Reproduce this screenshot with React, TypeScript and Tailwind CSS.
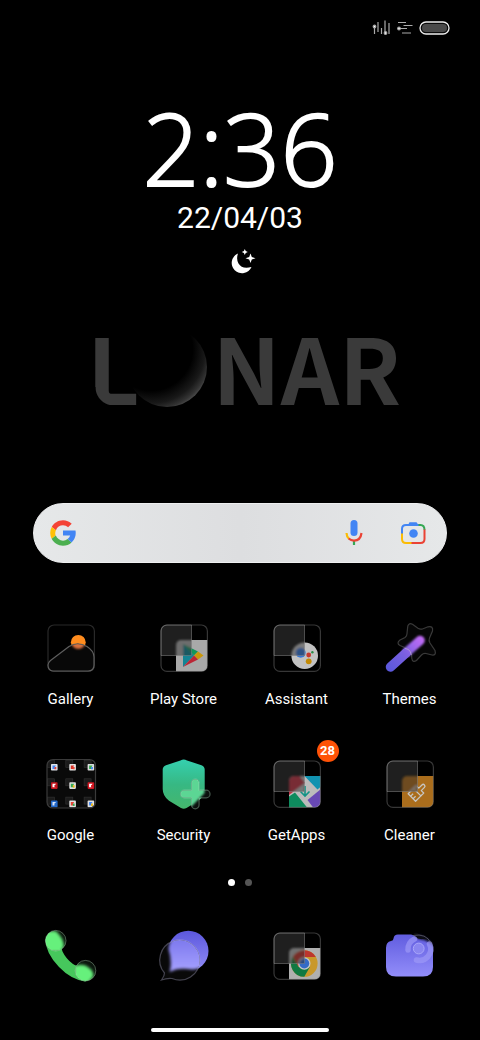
import type { ReactNode } from "react";

type IconProps = { children: ReactNode };

function Canvas({ children }: IconProps) {
  return (
    <svg viewBox="0 0 64 64" className="size-16 shrink-0" fill="none" aria-hidden="true">
      {children}
    </svg>
  );
}

/* Lunar tile: dark frame, smoked glass in the corner, app art peeking out below it. */
function GlassTile({ id, children }: { id: string; children: ReactNode }) {
  return (
    <Canvas>
      <defs>
        <clipPath id={`${id}-out`}>
          <path d="M39.5 24H55.5V55.5H24V39.5H39.5Z" />
        </clipPath>
        <clipPath id={`${id}-in`}>
          <rect x="9" y="9" width="30.5" height="30.5" />
        </clipPath>
        <clipPath id={`${id}-tile`}>
          <path d="M29 24H55.5V49.5A6 6 0 0 1 49.5 55.5H24V29A5 5 0 0 1 29 24Z" />
        </clipPath>
        <filter id={`${id}-blur`}>
          <feGaussianBlur stdDeviation="0.8" />
        </filter>
      </defs>
      <path d="M15 9H39.5V39.5H9V15A6 6 0 0 1 15 9Z" fill="#1f1f1f" />
      <g clipPath={`url(#${id}-in)`} opacity="0.5">
        <g filter={`url(#${id}-blur)`}>
          <g clipPath={`url(#${id}-tile)`}>{children}</g>
        </g>
      </g>
      <g clipPath={`url(#${id}-out)`} opacity="0.9">
        <g clipPath={`url(#${id}-tile)`}>{children}</g>
      </g>
      <rect x="9" y="9" width="46.4" height="46.4" rx="6" stroke="#8a8a8a" strokeOpacity="0.4" strokeWidth="1.2" />
      <path d="M15 9H39.5V39.5H9V15A6 6 0 0 1 15 9Z" stroke="#999" strokeOpacity="0.45" />
    </Canvas>
  );
}

function GalleryIcon() {
  const hill = "M11.5 44.5L30 30.5Q38.5 25 48 30.5Q55 35 55 41V49Q55 55 49 55H14Q9 54.500 9 49Q9 46.500 11.500 44.500Z";
  return (
    <Canvas>
      <defs>
        <filter id="sun-blur"><feGaussianBlur stdDeviation="1" /></filter>
        <clipPath id="hill"><path d={hill} /></clipPath>
      </defs>
      <rect x="9" y="9" width="46.4" height="46.4" rx="6" stroke="#292929" strokeWidth="1.2" />
      <circle cx="39.300" cy="26.300" r="7.400" fill="#ff8c1e" />
      <path d={hill} fill="#080808" />
      <g clipPath="url(#hill)"><circle cx="39.300" cy="26" r="7" fill="#d9703c" filter="url(#sun-blur)" /></g>
      <path d={hill} stroke="#5e5e5e" strokeWidth="1.2" />
    </Canvas>
  );
}

function PlayStoreIcon() {
  return (
    <GlassTile id="play">
      <rect x="24" y="24" width="32" height="32" fill="#bcbcbc" />
      <path d="M31 28L42 39.500L31 51Z" fill="#1793a5" />
      <path d="M31 28L46 35.500L42 39.500Z" fill="#16a765" />
      <path d="M46 35.500L51.500 39.500L46 43.500L42 39.500Z" fill="#e0a80c" />
      <path d="M31 51L46 43.500L42 39.500Z" fill="#cf2b3c" />
    </GlassTile>
  );
}

function AssistantIcon() {
  return (
    <GlassTile id="assist">
      <circle cx="39.700" cy="39.700" r="13.300" fill="#d8d8d8" />
      <circle cx="35.700" cy="36.700" r="5" fill="#3d86ee" />
      <circle cx="43.700" cy="39" r="2.400" fill="#da3f35" />
      <circle cx="47.400" cy="36.300" r="1.200" fill="#2d9a4c" />
      <circle cx="43.700" cy="45.300" r="2.900" fill="#d99a05" />
    </GlassTile>
  );
}

function ThemesIcon() {
  const star =
    "M29.800 10Q31 6.500 34.500 8.300L40 12.300Q42 13.600 44.500 13L50 10.800Q55.500 9.500 54.500 15L51.500 22Q50.500 24.500 52 27L57 34.500Q58.500 39.500 54 39L48 37.500Q45.500 37 43.500 39L38.500 44.500Q34.500 47 33.800 42.500L33.500 38Q33 35 30.500 33.300L22 29.500Q18 27 22 24L27 21.500Q29 20 29 17.500Z";
  return (
    <Canvas>
      <defs>
        <linearGradient id="wand" x1="10" y1="54" x2="44" y2="22" gradientUnits="userSpaceOnUse">
          <stop stopColor="#5a58dc" />
          <stop offset="0.5" stopColor="#7a60e0" />
          <stop offset="1" stopColor="#c36cf8" />
        </linearGradient>
        <filter id="wand-blur" x="-50%" y="-50%" width="200%" height="200%"><feGaussianBlur stdDeviation="1.300" /></filter>
      </defs>
      <path d={star} fill="#060606" />
      <path d="M12.500 51L28.500 36.500" stroke="url(#wand)" strokeWidth="9.500" strokeLinecap="round" />
      <path d="M29 36L42 24.500" stroke="url(#wand)" strokeWidth="9.500" strokeLinecap="round" filter="url(#wand-blur)" />
      <path d={star} stroke="#8b8b8b" strokeOpacity="0.4" strokeWidth="1.2" />
      <path d="M27 32.500L30 33.300Q33 35 33.300 39" stroke="#c9a8f0" strokeOpacity="0.6" />
    </Canvas>
  );
}

const folderApps = [
  ["#dfe3ea", "#4285f4", "#ea4335"], ["#e6e6e6", "#d93025", "#ea4335"], ["#dcdcdc", "#34a853", "#4285f4"],
  ["#c4141c", "#ffffff", "#c4141c"], ["#dedede", "#34a853", "#f2b705"], ["#cf1520", "#ffffff", "#cf1520"],
  ["#2369c9", "#dbe8fb", "#2369c9"], ["#e4e4e4", "#ea4335", "#34a853"], ["#e0e0e0", "#4285f4", "#f2b705"],
];

function GoogleFolderIcon() {
  return (
    <Canvas>
      <clipPath id="folder"><rect x="8" y="7.500" width="48.500" height="48.500" rx="6" /></clipPath>
      <g clipPath="url(#folder)">
        <rect x="8" y="7.500" width="48.500" height="48.500" fill="#0a0a0a" />
        {folderApps.map(([base, mark, accent], i) => (
          <g key={i} transform={`translate(${(i % 3) * 18.3} ${Math.floor(i / 3) * 18.3})`}>
            <rect x="8.500" y="8.500" width="7" height="7" fill="#1b1b1b" stroke="#333" strokeWidth="0.600" />
            <rect x="12" y="12" width="6.600" height="6.600" rx="0.800" fill={base} />
            <path d="M13.500 13.500H17L15.500 15.500L17 17H13.500Z" fill={mark} />
            <path d="M15.500 15H17.300V17.300H15.500Z" fill={accent} />
          </g>
        ))}
      </g>
      <rect x="8" y="7.500" width="48.500" height="48.500" rx="6" stroke="#3a3a3a" strokeWidth="1.2" />
    </Canvas>
  );
}

function SecurityIcon() {
  const plus =
    "M39.500 31A3.800 3.800 0 0 1 47.100 31V38.200H54.300A3.800 3.800 0 0 1 54.300 45.800H47.100V53A3.800 3.800 0 0 1 39.500 53V45.800H32.300A3.800 3.800 0 0 1 32.300 38.200H39.500Z";
  const shield = "M28.500 8.500Q31.700 6.500 35 8.500L49.500 13.200Q52.700 14.500 52.700 17.500V37Q52.700 44 46.500 48.800L34.500 56Q31.700 57.500 29 56L17 48.800Q10.700 44 10.700 37V17.500Q10.700 14.500 14 13.200Z";
  return (
    <Canvas>
      <defs>
        <linearGradient id="shield" x1="0" y1="8" x2="0" y2="57" gradientUnits="userSpaceOnUse">
          <stop stopColor="#35cfae" />
          <stop offset="0.500" stopColor="#37b883" />
          <stop offset="1" stopColor="#45b66c" />
        </linearGradient>
        <filter id="plus-blur"><feGaussianBlur stdDeviation="1.200" /></filter>
        <clipPath id="plus"><path d={plus} /></clipPath>
      </defs>
      <path d={shield} fill="url(#shield)" />
      <g clipPath="url(#plus)">
        <rect x="26" y="26" width="34" height="34" fill="#0b0f0d" />
        <path d="M20 20H52.500V41L40 54L20 60Z" fill="#5bd694" filter="url(#plus-blur)" />
      </g>
      <path d={plus} stroke="#b6e8cc" strokeOpacity="0.350" strokeWidth="1.200" />
    </Canvas>
  );
}

function GetAppsIcon() {
  return (
    <GlassTile id="getapps">
      <rect x="24" y="24" width="32" height="32" fill="#d0d0d0" />
      <path d="M24 24H35L40 31L24 43Z" fill="#d23a4e" />
      <path d="M39.500 24H56V34.500L52.500 37.500Z" fill="#12a2c4" />
      <path d="M24 44.500L30 40.500L42.500 56H24Z" fill="#109b69" />
      <path d="M42.500 48L56 37V56H48.500Z" fill="#7450c8" />
      <path d="M40 34V43.500M35.500 39.500L40 44L44.500 39.500" stroke="#14a394" strokeWidth="1.600" />
    </GlassTile>
  );
}

function CleanerIcon() {
  return (
    <GlassTile id="cleaner">
      <rect x="24" y="24" width="32" height="32" fill="#bd7920" />
      <g transform="rotate(45 39 40)" stroke="#dddcd8" strokeWidth="1.300" strokeLinejoin="round">
        <path d="M37.500 36V31.500A1.700 1.700 0 0 1 41 31.500V36H44.500V40H34V36Z" />
        <path d="M34 40V47.500H44.500V40M37.500 47V44M41 47V44" />
      </g>
    </GlassTile>
  );
}

function PhoneIcon() {
  return (
    <Canvas>
      <defs>
        <filter id="phone-blur"><feGaussianBlur stdDeviation="1.5" /></filter>
        <clipPath id="ear"><circle cx="16.700" cy="16.700" r="10.300" /></clipPath>
        <clipPath id="mouth"><circle cx="46.500" cy="46.700" r="10.300" /></clipPath>
      </defs>
      <path d="M6.400 15Q6.500 29 20 43Q32 55.500 46 57.400Q50 57 52 54L44 40Q38 43 34 40Q27 35 23.500 27.500Q22 24 24 21Z" fill="#46c75c" />
      <g clipPath="url(#ear)">
        <rect x="5" y="5" width="24" height="24" fill="#0b150d" />
        <path d="M4 7H17Q25 15 25 22L22 28H8L4 22Z" fill="#66f07c" filter="url(#phone-blur)" />
      </g>
      <g clipPath="url(#mouth)">
        <rect x="35" y="35" width="24" height="24" fill="#0b150d" />
        <path d="M35 42Q44 39 49 43Q56 48 54 53L49 59H38L34 54Z" fill="#66f07c" filter="url(#phone-blur)" />
      </g>
      <circle cx="16.700" cy="16.700" r="10.300" stroke="#c9f5cf" strokeOpacity="0.350" />
      <circle cx="46.500" cy="46.700" r="10.300" stroke="#c9f5cf" strokeOpacity="0.350" />
    </Canvas>
  );
}

function MessagesIcon() {
  const bubble = "M12.500 49A20 20 0 1 1 20 54.500Q15 54 9.500 56Q12.500 52 12.500 49Z";
  return (
    <Canvas>
      <defs>
        <linearGradient id="chat" x1="0" y1="7" x2="0" y2="47" gradientUnits="userSpaceOnUse">
          <stop stopColor="#5c58de" />
          <stop offset="1" stopColor="#918cf6" />
        </linearGradient>
        <linearGradient id="chat-lit" x1="0" y1="16" x2="0" y2="47" gradientUnits="userSpaceOnUse">
          <stop stopColor="#7d79ee" />
          <stop offset="1" stopColor="#a5a0ff" />
        </linearGradient>
        <filter id="chat-blur"><feGaussianBlur stdDeviation="1.500" /></filter>
        <clipPath id="bubble"><path d={bubble} /></clipPath>
      </defs>
      <circle cx="36.300" cy="27" r="20.200" fill="url(#chat)" />
      <g clipPath="url(#bubble)">
        <rect width="64" height="64" fill="#090909" />
        <path d="M16.500 25Q18 8 36 7Q56 8 56.500 27Q54 46 40 45.500Q26 43 17.500 48Q20.500 38 16.500 25Z" fill="url(#chat-lit)" filter="url(#chat-blur)" />
      </g>
      <path d={bubble} stroke="#b9b7da" strokeOpacity="0.350" strokeWidth="1.200" />
    </Canvas>
  );
}

function ChromeIcon() {
  return (
    <GlassTile id="chrome">
      <rect x="24" y="24" width="32" height="32" fill="#c4c4c4" />
      <circle cx="39.300" cy="39.500" r="13.300" fill="#dfa92f" />
      <path d="M27.800 32.800A13.300 13.300 0 0 1 50.800 33H39.300L33.500 42.800Z" fill="#d23c34" />
      <path d="M27.800 32.800L33.600 43L45 42.800L39.300 52.800A13.300 13.300 0 0 1 27.800 32.800Z" fill="#12874a" />
      <circle cx="39.300" cy="39.500" r="6.200" fill="#dedede" />
      <circle cx="39.300" cy="39.500" r="4.900" fill="#3a76dc" />
    </GlassTile>
  );
}

function FilesIcon() {
  const body = "M20 10.500H33Q36 10.500 38 13Q39.500 15 43 15H47Q55 15 55 24V43Q55 52.600 45 52.600H18Q8 52.600 8 43V24Q8 18 13 17Q15.500 16.500 15.500 14.500Q16 10.500 20 10.500Z";
  return (
    <Canvas>
      <defs>
        <linearGradient id="files" x1="0" y1="10" x2="0" y2="53" gradientUnits="userSpaceOnUse">
          <stop stopColor="#605cdf" />
          <stop offset="1" stopColor="#938efa" />
        </linearGradient>
        <filter id="files-blur"><feGaussianBlur stdDeviation="1.200" /></filter>
      </defs>
      <path d={body} fill="url(#files)" />
      <path d="M35 9.500Q47 8 55.500 19V23Q50 16 44 15.500Q38 15 35 9.500Z" fill="#0c0c18" filter="url(#files-blur)" />
      <path d="M30 26A11.200 11.200 0 0 1 36.500 15" stroke="#9d99f6" strokeOpacity="0.700" strokeWidth="5.500" strokeLinecap="round" />
      <path d="M51.500 20A11.300 11.300 0 0 1 38.500 36" stroke="#9d99f6" strokeOpacity="0.700" strokeWidth="5.500" strokeLinecap="round" />
      <path d="M35 11.500Q48 9 53 19" stroke="#77768f" strokeOpacity="0.600" />
      <circle cx="40.700" cy="24.500" r="5.400" fill="#8a86f0" stroke="#aaa7fa" />
    </Canvas>
  );
}

const apps = [
  { name: "Gallery", icon: <GalleryIcon /> },
  { name: "Play Store", icon: <PlayStoreIcon /> },
  { name: "Assistant", icon: <AssistantIcon /> },
  { name: "Themes", icon: <ThemesIcon /> },
  { name: "Google", icon: <GoogleFolderIcon /> },
  { name: "Security", icon: <SecurityIcon /> },
  { name: "GetApps", icon: <GetAppsIcon />, badge: 28 },
  { name: "Cleaner", icon: <CleanerIcon /> },
];

const dock = [
  { name: "Phone", icon: <PhoneIcon /> },
  { name: "Messages", icon: <MessagesIcon /> },
  { name: "Chrome", icon: <ChromeIcon /> },
  { name: "Files", icon: <FilesIcon /> },
];

function StatusBar() {
  return (
    <header className="flex h-14 items-center justify-end gap-1 pr-[30px]">
      <svg viewBox="0 0 20 18" className="h-[18px] w-5" stroke="#aaa" strokeWidth="1.200" aria-hidden="true">
        <path d="M2.500 7V15M6 3V13M9.500 9V15M13 1.500V15M17 4V15" />
        <circle cx="2.500" cy="7.500" r="1.300" fill="#fff" />
        <circle cx="13.500" cy="14" r="1.300" fill="#fff" />
      </svg>
      <svg viewBox="0 0 18 18" className="size-[18px]" stroke="#aaa" strokeWidth="1.200" aria-hidden="true">
        <path d="M2 3.500H10M7.500 6.500H16.500M2.500 9.500H11M6 14H15" />
        <circle cx="3" cy="9.500" r="1.300" fill="#fff" />
      </svg>
      <svg viewBox="0 0 32 16" className="h-4 w-8" aria-hidden="true">
        <rect x="2" y="2" width="29" height="12" rx="6" fill="#0a0a0a" stroke="#eee" strokeWidth="1.300" />
        <rect x="4" y="4" width="25" height="8" rx="4" fill="#4a4a4a" />
      </svg>
    </header>
  );
}

function Clock() {
  return (
    <section className="mt-10 flex flex-col items-center">
      <time className="font-['Open_Sans',sans-serif] text-[100px]/[102px] font-light [-webkit-text-stroke:2px_#fff]">
        2:36
      </time>
      <p className="mt-[2px] text-[30px]/[36px]">22/04/03</p>
      <svg viewBox="0 0 28 28" className="ml-[6px] mt-3 size-7" fill="#fff" aria-hidden="true">
        <path d="M9 5.500A10.300 10.300 0 1 0 22.500 19Q13 21.500 9.500 15.500Q7 11 9 5.500Z" />
        <path d="M15.800 1L16.700 3.100L18.800 4L16.700 4.900L15.800 7L14.900 4.900L12.800 4L14.900 3.100Z" />
        <path d="M21.500 5.500L22.800 8.900L26.500 10.200L22.800 11.500L21.500 15L20.200 11.500L16.500 10.200L20.200 8.900Z" />
      </svg>
    </section>
  );
}

function Wordmark() {
  return (
    <h1
      aria-label="Lunar"
      className="mt-[46px] flex items-center justify-center font-['Noto_Sans_CJK_SC',sans-serif] text-[91px]/[84px] font-bold text-[#3a3a3a]"
    >
      <span className="relative ml-2">
        L
        {/* soften the outer and inner bends of the L */}
        <span className="absolute bottom-0 left-[7px] size-5 bg-[radial-gradient(circle_at_100%_0%,transparent_18px,#000_19px)]" />
        <span className="absolute bottom-[11px] left-[20px] size-2 bg-[radial-gradient(circle_at_100%_0%,transparent_7px,#3a3a3a_8px)]" />
      </span>
      <svg viewBox="0 0 82 82" className="-ml-[13px] mr-1 mt-1 size-[82px]" aria-hidden="true">
        <defs>
          <radialGradient id="moon" cx="24" cy="23" r="64" gradientUnits="userSpaceOnUse">
            <stop offset="0.650" stopColor="#191919" stopOpacity="0" />
            <stop offset="0.850" stopColor="#191919" />
            <stop offset="0.950" stopColor="#333" />
            <stop offset="1" stopColor="#484848" />
          </radialGradient>
        </defs>
        <circle cx="40" cy="41" r="40" fill="url(#moon)" />
      </svg>
      <span>NAR</span>
    </h1>
  );
}

function SearchBar() {
  return (
    <form className="mx-[33px] mt-[95px] flex h-[60px] items-center rounded-full border border-[#eeeff0] bg-linear-to-r from-[#e6e8e9] via-[#dddee0] to-[#e6e8e9] pl-[15px] pr-[19px]">
      <svg viewBox="2 2 44 44" className="size-7" aria-hidden="true">
        <path fill="#f44336" d="M6.300 14.700l6.600 4.800C14.700 15.100 19 12 24 12c3.100 0 5.900 1.200 8 3l5.700-5.700C34 6.100 29.300 4 24 4 16.300 4 9.700 8.300 6.300 14.700z" />
        <path fill="#ffc107" d="M12.400 28.100A12 12 0 0 1 12.900 19.500L6.300 14.700A20 20 0 0 0 6.200 33z" />
        <path fill="#4caf50" d="M24 44c5.200 0 9.900-2 13.400-5.200l-6.200-5.200A11.900 11.900 0 0 1 24 36c-5.200 0-9.600-3.300-11.300-7.900l-6.500 5C9.500 39.600 16.200 44 24 44z" />
        <path fill="#4285f4" d="M43.600 20H24v8h11.300a12 12 0 0 1-4.100 5.600l6.200 5.200C37 39.200 44 34 44 24c0-1.300-.1-2.700-.4-4z" />
      </svg>
      <input type="search" aria-label="Search" className="min-w-0 flex-1 bg-transparent px-3 text-base text-gray-800 outline-none" />
      <button type="button" aria-label="Voice search">
        <svg viewBox="0 0 28 28" className="size-7" fill="none" strokeWidth="2.200" aria-hidden="true">
          <rect x="10.500" y="1" width="7" height="16" rx="3.500" fill="#4285f4" />
          <path d="M14 21V26" stroke="#34a853" />
          <path d="M6.500 14Q6.600 17.500 9 19.800" stroke="#fbbc04" />
          <path d="M8.600 19.500Q11 21.600 14 21.600Q20.600 21.400 21.500 14" stroke="#ea4335" />
        </svg>
      </button>
      <button type="button" aria-label="Search with camera" className="ml-[31px]">
        <svg viewBox="0 0 28 28" className="size-7" fill="none" strokeWidth="2" aria-hidden="true">
          <path d="M3 15V10Q3 6 7 6H20" stroke="#4285f4" />
          <path d="M9 6L10.500 3.300H17.500L19.500 6Z" fill="#4285f4" />
          <path d="M19.500 6H21.500Q25.500 6 25.500 11" stroke="#34a853" />
          <path d="M25.500 10.500V20Q25.500 24 21.500 24H12" stroke="#ea4335" />
          <path d="M3 14.500V20Q3 24 7 24H12.500" stroke="#fbbc04" />
          <circle cx="14.500" cy="14.500" r="4.300" fill="#4285f4" />
        </svg>
      </button>
    </form>
  );
}

export default function App() {
  return (
    <div className="flex min-h-screen flex-col bg-black font-[Roboto,sans-serif] text-white">
      <StatusBar />
      <main className="flex flex-1 flex-col">
        <Clock />
        <Wordmark />
        <SearchBar />
        <div className="mt-[53px] grid grid-cols-4 gap-y-[43px] px-[14px]">
          {apps.map((app) => (
            <button key={app.name} type="button" className="flex flex-col items-center gap-[9px]">
              <span className="relative">
                {app.icon}
                {app.badge && (
                  <span className="absolute -right-[10px] -top-3 flex size-[22px] items-center justify-center rounded-full bg-[#ff5207] text-[13px] font-bold">
                    {app.badge}
                  </span>
                )}
              </span>
              <span className="text-[15px]/[20px]">{app.name}</span>
            </button>
          ))}
        </div>
        <div className="mt-[34px] flex justify-center gap-[10px]">
          <span className="size-[7px] rounded-full bg-white" />
          <span className="size-[7px] rounded-full bg-[#555]" />
        </div>
      </main>
      <nav aria-label="Dock" className="grid grid-cols-4 px-[14px]">
        {dock.map((app) => (
          <button key={app.name} type="button" aria-label={app.name} className="flex justify-center">
            {app.icon}
          </button>
        ))}
      </nav>
      <div className="mx-auto mb-2 mt-10 h-1 w-[37%] rounded-full bg-white" />
    </div>
  );
}
